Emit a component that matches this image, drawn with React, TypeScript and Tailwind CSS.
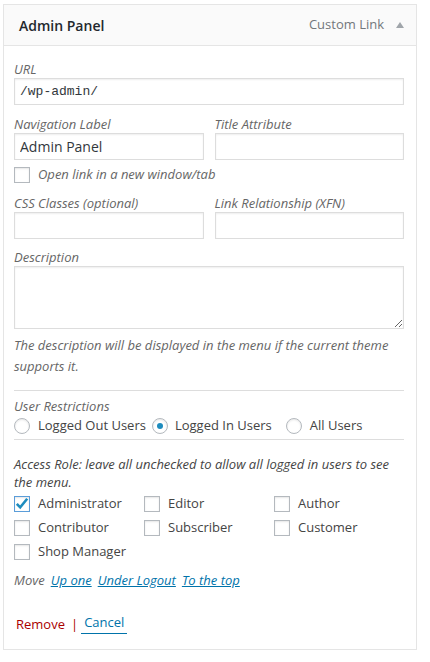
import { useState } from 'react';

const labelCn = 'block text-[13px] leading-[18px] italic text-[#666]';
const inputCn =
  'block w-full h-[27px] border border-[#ddd] bg-white px-[5px] text-[14px] text-[#32373c] shadow-[inset_0_1px_2px_rgba(0,0,0,0.07)] outline-none';

const Checkbox = ({ checked }: { checked?: boolean }) => (
  <span
    className={`flex-none w-[16px] h-[16px] border bg-white flex items-center justify-center shadow-[inset_0_1px_2px_rgba(0,0,0,0.1)] ${
      checked ? 'border-[#5b9dd9]' : 'border-[#b4b9be]'
    }`}
  >
    {checked && (
      <svg width="14" height="14" viewBox="0 0 14 14">
        <path d="M1.8 6.8 L5.2 10.4 L12.2 1.8" fill="none" stroke="#1e8cbe" strokeWidth="2.6" />
      </svg>
    )}
  </span>
);

const Radio = ({ checked }: { checked?: boolean }) => (
  <span className="flex-none w-[16px] h-[16px] rounded-full border border-[#b4b9be] bg-white flex items-center justify-center shadow-[inset_0_1px_2px_rgba(0,0,0,0.1)]">
    {checked && <span className="w-[6px] h-[6px] rounded-full bg-[#1e8cbe]" />}
  </span>
);

const roles: { name: string; checked?: boolean }[] = [
  { name: 'Administrator', checked: true },
  { name: 'Editor' },
  { name: 'Author' },
  { name: 'Contributor' },
  { name: 'Subscriber' },
  { name: 'Customer' },
  { name: 'Shop Manager' },
];

const App = () => {
  const [url] = useState('/wp-admin/');

  return (
    <div className="w-[430px] h-[662px] bg-white pt-[4px] pl-[3px] font-['Open_Sans',sans-serif] text-[#32373c]">
      <div className="w-[414px] border border-[#e5e5e5]">
        <div className="h-[41px] flex items-center bg-[#fafafa] border-b border-[#e5e5e5] pl-[15px] pr-[12px]">
          <span className="text-[14px] font-semibold text-[#23282d]">Admin Panel</span>
          <span className="ml-auto text-[13px] text-[#72777c]">Custom Link</span>
          <svg width="8" height="6" viewBox="0 0 8 6" className="ml-[12px]">
            <path d="M0 6 L4 0 L8 6 Z" fill="#a0a5aa" />
          </svg>
        </div>

        <div className="pl-[10px] pr-[12px] pt-[14px] pb-[15px]">
          <label className={labelCn}>URL</label>
          <input
            readOnly
            value={url}
            className={`${inputCn} font-['Liberation_Mono',monospace] !text-[13px]`}
          />

          <div className="mt-[10px] grid grid-cols-2 gap-x-[11px]">
            <div>
              <label className={labelCn}>Navigation Label</label>
              <input readOnly value="Admin Panel" className={inputCn} />
            </div>
            <div>
              <label className={labelCn}>Title Attribute</label>
              <input readOnly value="" className={inputCn} />
            </div>
          </div>

          <div className="mt-[7px] flex items-center gap-[8px] h-[16px]">
            <Checkbox />
            <span className="text-[13px] italic text-[#666]">Open link in a new window/tab</span>
          </div>

          <div className="mt-[11px] grid grid-cols-2 gap-x-[11px]">
            <div>
              <label className={labelCn}>CSS Classes (optional)</label>
              <input readOnly value="" className={inputCn} />
            </div>
            <div>
              <label className={labelCn}>Link Relationship (XFN)</label>
              <input readOnly value="" className={inputCn} />
            </div>
          </div>

          <label className={`${labelCn} mt-[9px]`}>Description</label>
          <textarea
            readOnly
            className="block w-full h-[63px] border border-[#ddd] bg-white shadow-[inset_0_1px_2px_rgba(0,0,0,0.07)] outline-none"
          />
          <p className="mt-[6px] text-[13px] leading-[21px] italic text-[#666]">
            The description will be displayed in the menu if the current theme supports it.
          </p>

          <div className="mt-[13px] border-t border-[#ddd]" />
          <label className={`${labelCn} mt-[6px]`}>User Restrictions</label>
          <div className="mt-[2px] flex items-center h-[18px] text-[13px] text-[#444]">
            <Radio />
            <span className="ml-[8px]">Logged Out Users</span>
            <span className="ml-[6px]">
              <Radio checked />
            </span>
            <span className="ml-[7px]">Logged In Users</span>
            <span className="ml-[14px]">
              <Radio />
            </span>
            <span className="ml-[8px]">All Users</span>
          </div>
          <div className="mt-[4px] border-t border-[#ddd]" />

          <p className="mt-[15px] text-[13px] leading-[18px] italic text-[#444]">
            Access Role: leave all unchecked to allow all logged in users to see the menu.
          </p>
          <div className="mt-[1px] grid grid-cols-[130px_130px_130px]">
            {roles.map((r) => (
              <div key={r.name} className="h-[24px] flex items-center gap-[8px] text-[13px] text-[#444]">
                <Checkbox checked={r.checked} />
                <span>{r.name}</span>
              </div>
            ))}
          </div>

          <div className="mt-[7px] flex items-center gap-[6px] text-[13px] leading-[18px] italic">
            <span className="text-[#666]">Move</span>
            <a className="text-[#0073aa] underline">Up one</a>
            <a className="text-[#0073aa] underline">Under Logout</a>
            <a className="text-[#0073aa] underline">To the top</a>
          </div>

          <div className="mt-[24px] pl-[2px] flex items-center text-[13px] leading-[18px]">
            <a className="text-[#a00]">Remove</a>
            <span className="ml-[6px] mr-[3px] text-[#a00]">|</span>
            <a className="px-[3px] pb-[2px] text-[#0073aa] border-b border-[#0073aa]">Cancel</a>
          </div>
        </div>
      </div>
    </div>
  );
};

export default App;
